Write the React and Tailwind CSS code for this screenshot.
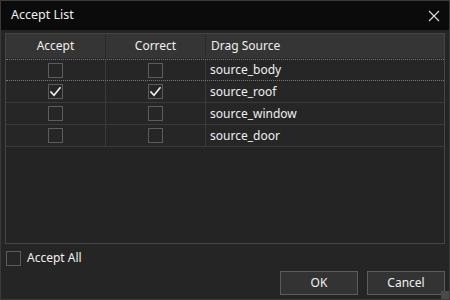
import React from 'react';

const rows = [
  { name: 'source_body', accept: false, correct: false, focused: true },
  { name: 'source_roof', accept: true, correct: true },
  { name: 'source_window', accept: false, correct: false },
  { name: 'source_door', accept: false, correct: false },
];

function Check({ checked }) {
  return (
    <div className="w-[15px] h-[15px] border border-[#5c5c5c] bg-[#262626] flex items-center justify-center">
      {checked && (
        <svg width="13" height="13" viewBox="0 0 13 13" fill="none">
          <path d="M2 7l3 3.2L11 2.8" stroke="#f2f2f2" strokeWidth="1.6" strokeLinecap="square" />
        </svg>
      )}
    </div>
  );
}

export default function App() {
  return (
    <div
      className="w-[450px] h-[300px] bg-[#252525] border border-[#3a3a3a] flex flex-col text-[12px] text-[#f0f0f0] relative"
      style={{ fontFamily: '"Noto Sans", "Open Sans", sans-serif' }}
    >
      {/* Title bar */}
      <div className="h-[29px] bg-[#0b0b0b] flex items-center justify-between pl-[10px] pr-[9px] shrink-0">
        <span className="text-[12.5px]">Accept List</span>
        <svg width="12" height="12" viewBox="0 0 12 12">
          <path d="M1 1l10 10M11 1L1 11" stroke="#e0e0e0" strokeWidth="1.1" />
        </svg>
      </div>

      {/* Table */}
      <div className="mx-[4px] mt-[3px] h-[211px] border border-[#454545] bg-[#242424] flex flex-col">
        <div className="h-[25px] bg-[#353535] flex border-b border-[#2a2a2a] shrink-0">
          <div className="w-[100px] flex items-center justify-center border-r border-[#2a2a2a]">Accept</div>
          <div className="w-[100px] flex items-center justify-center border-r border-[#2a2a2a]">Correct</div>
          <div className="flex-1 flex items-center pl-[5px]">Drag Source</div>
        </div>
        {rows.map((r) => (
          <div
            key={r.name}
            className={
              r.focused
                ? 'h-[22px] flex border-y border-dotted border-[#777] bg-[#262626]'
                : 'h-[22px] flex border-b border-[#3a3a3a] bg-[#262626]'
            }
          >
            <div className="w-[100px] flex items-center justify-center border-r border-[#3a3a3a]">
              <Check checked={r.accept} />
            </div>
            <div className="w-[100px] flex items-center justify-center border-r border-[#3a3a3a]">
              <Check checked={r.correct} />
            </div>
            <div className="flex-1 flex items-center pl-[4px]">{r.name}</div>
          </div>
        ))}
      </div>

      {/* Accept all */}
      <div className="flex items-center gap-[6px] ml-[5px] mt-[5px]">
        <Check checked={false} />
        <span>Accept All</span>
      </div>

      {/* Buttons */}
      <div className="flex justify-end gap-[9px] mr-[4px] mt-[4px]">
        <button className="w-[78px] h-[24px] bg-[#333333] border border-[#5c5c5c] text-[12px] text-[#f0f0f0]">OK</button>
        <button className="w-[78px] h-[24px] bg-[#333333] border border-[#5c5c5c] text-[12px] text-[#f0f0f0]">Cancel</button>
      </div>

      <div className="absolute right-0 bottom-0 w-[8px] h-[8px] bg-[#4a4a4a]" />
    </div>
  );
}
